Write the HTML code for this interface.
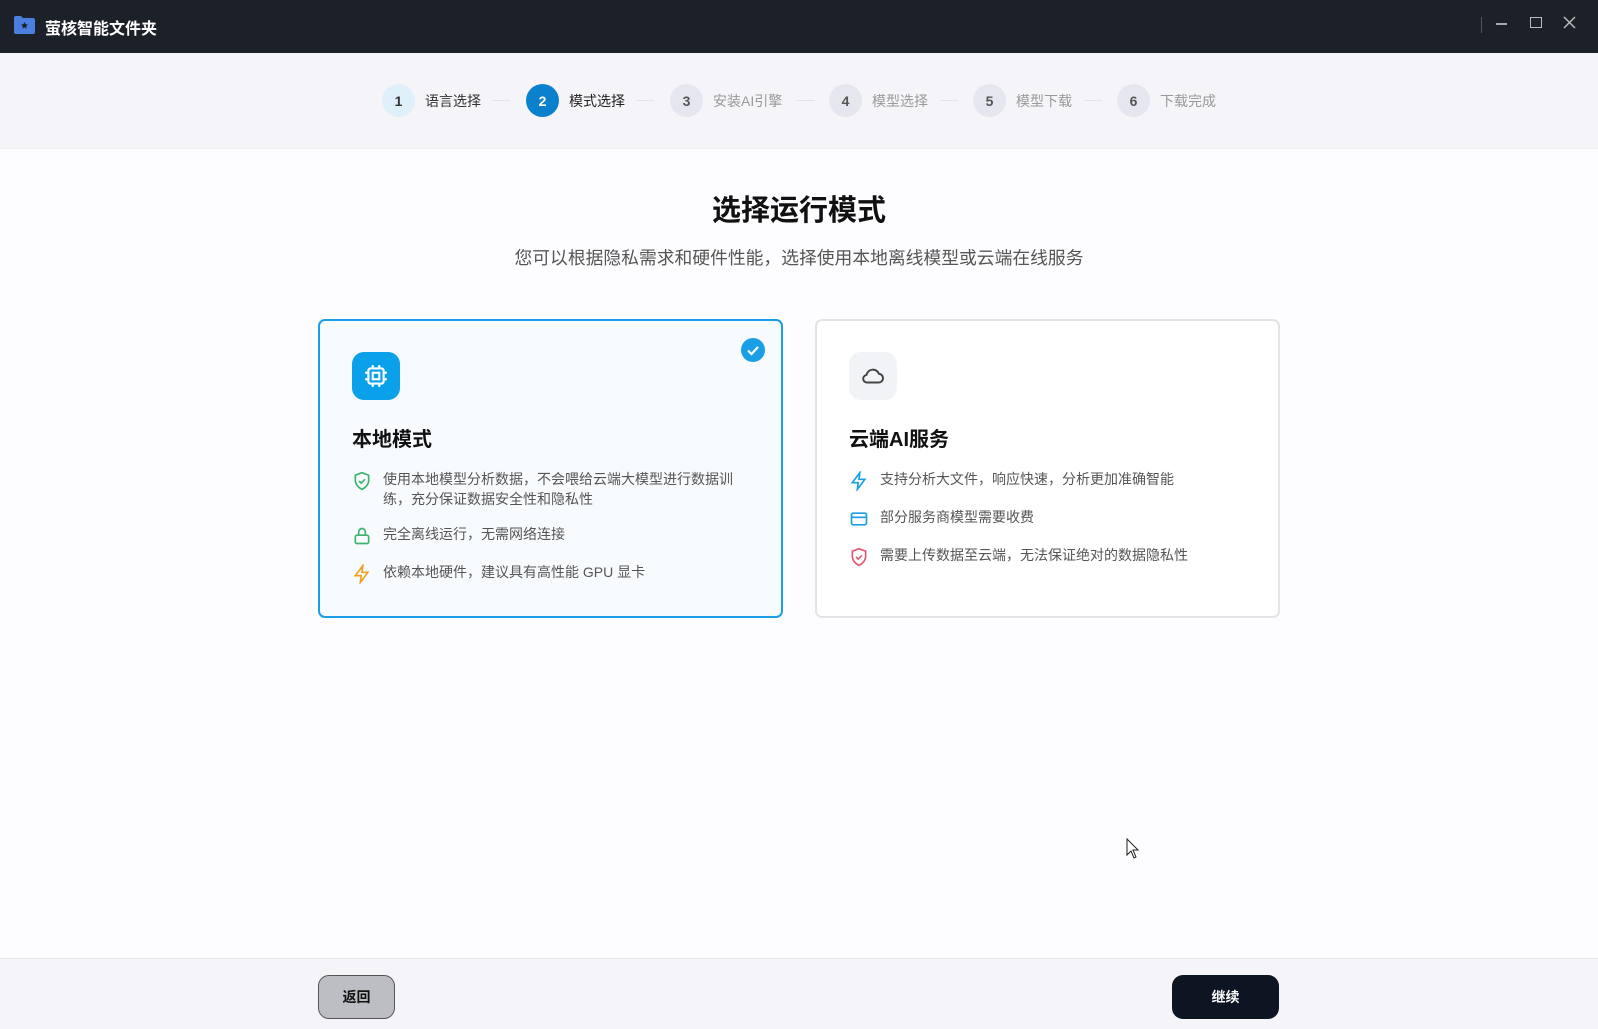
<!DOCTYPE html>
<html><head><meta charset="utf-8"><style>
*{margin:0;padding:0;box-sizing:border-box}
body{width:1598px;height:1029px;overflow:hidden;background:#fdfcfe;font-family:"Liberation Sans","Noto Sans CJK SC",sans-serif;position:relative;color:#222}
.tb{position:absolute;left:0;top:0;width:1598px;height:53px;background:#1c2129}
.tb .t{position:absolute;left:45px;top:15px;color:#fff;font-size:16px;font-weight:bold}
.steps{position:absolute;top:53px;left:0;width:1598px;height:96px;background:#f5f5f9}
.st{position:absolute;top:84px;height:33px;display:flex;align-items:center}
.c{width:33px;height:33px;border-radius:50%;background:#e6e7ee;color:#555;font-size:14px;display:flex;align-items:center;justify-content:center;font-weight:bold}
.st span{margin-left:10px;font-size:14px;color:#999}
.ln{position:absolute;top:100px;width:18px;height:1px;background:#e2e2e8}
h1{position:absolute;top:187px;left:0;width:1598px;text-align:center;font-size:29px;font-weight:bold;color:#111}
.sub{position:absolute;top:244px;width:1598px;text-align:center;font-size:17.8px;color:#555}
.card{position:absolute;top:319px;width:465px;height:299px;border-radius:7px;background:#fff;border:2px solid #e3e3e8}
.card.sel{border:2px solid #1a9ee6;background:#f8fbfe}
.ib{position:absolute;left:32px;top:31px;width:48px;height:48px;border-radius:12px;display:flex;align-items:center;justify-content:center}
.ct{position:absolute;left:32px;top:102px;font-size:20px;font-weight:bold;color:#111}
.it{position:absolute;left:63px;font-size:14px;color:#555;line-height:20px;width:370px}
.ic{position:absolute;left:32px}
.btn{position:absolute;top:975px;height:44px;border-radius:11px;display:flex;align-items:center;justify-content:center;font-size:14px;font-weight:bold}
</style></head><body>
<div class="tb">
<svg style="position:absolute;left:14px;top:16px" width="21" height="18" viewBox="0 0 21 18"><path d="M0 2a2 2 0 0 1 2-2h5l2 2h10a2 2 0 0 1 2 2v12a2 2 0 0 1-2 2H2a2 2 0 0 1-2-2z" fill="#4a7fe0"/><path d="M10.5 6l1.1 2.3 2.4.3-1.8 1.6.5 2.4-2.2-1.2-2.2 1.2.5-2.4-1.8-1.6 2.4-.3z" fill="#1c2129"/></svg>
<div class="t">萤核智能文件夹</div>
<div style="position:absolute;left:1481px;top:17px;width:1px;height:16px;background:#555"></div>
<div style="position:absolute;left:1496px;top:23px;width:11px;height:1.5px;background:#aaa"></div>
<div style="position:absolute;left:1530px;top:17px;width:12px;height:11px;border:1.5px solid #bbb"></div>
<svg style="position:absolute;left:1563px;top:16px" width="13" height="13"><path d="M1 1l11 11M12 1L1 12" stroke="#bbb" stroke-width="1.5"/></svg>
</div>
<div class="steps"></div>
<div style="position:absolute;top:148px;left:0;width:1598px;height:1px;background:#eee"></div>
<div class="st" style="left:382px"><div class="c" style="background:#dff0fb;color:#333">1</div><span style="color:#333">语言选择</span></div>
<div class="ln" style="left:492px"></div>
<div class="st" style="left:526px"><div class="c" style="background:#0b80cc;color:#fff">2</div><span style="color:#222">模式选择</span></div>
<div class="ln" style="left:636px"></div>
<div class="st" style="left:670px"><div class="c">3</div><span>安装AI引擎</span></div>
<div class="ln" style="left:797px"></div>
<div class="st" style="left:829px"><div class="c">4</div><span>模型选择</span></div>
<div class="ln" style="left:940px"></div>
<div class="st" style="left:973px"><div class="c">5</div><span>模型下载</span></div>
<div class="ln" style="left:1084px"></div>
<div class="st" style="left:1117px"><div class="c">6</div><span>下载完成</span></div>

<h1>选择运行模式</h1>
<div class="sub">您可以根据隐私需求和硬件性能，选择使用本地离线模型或云端在线服务</div>

<div class="card sel" style="left:318px">
<div class="ib" style="background:#0aa0ea"><svg width="26" height="26" viewBox="0 0 24 24" fill="none" stroke="#fff" stroke-width="2"><rect x="5" y="5" width="14" height="14" rx="2"/><rect x="9" y="9" width="6" height="6"/><path d="M9 2v3M15 2v3M9 19v3M15 19v3M2 9h3M2 15h3M19 9h3M19 15h3"/></svg></div>
<svg style="position:absolute;left:420px;top:16px" width="26" height="26"><circle cx="13" cy="13" r="12" fill="#1a9ee6"/><path d="M8 13.5l3.5 3.5 6.5-7" stroke="#fff" stroke-width="2.2" fill="none"/></svg>
<div class="ct">本地模式</div>
<svg class="ic" style="top:150px" width="20" height="20" viewBox="0 0 24 24" fill="none" stroke="#3cb46e" stroke-width="2"><path d="M12 2l8 3v6c0 5-3.5 9-8 11-4.5-2-8-6-8-11V5z"/><path d="M8.5 12l2.5 2.5 4.5-4.5"/></svg>
<div class="it" style="top:148px">使用本地模型分析数据，不会喂给云端大模型进行数据训练，充分保证数据安全性和隐私性</div>
<svg class="ic" style="top:205px" width="20" height="20" viewBox="0 0 24 24" fill="none" stroke="#3cb46e" stroke-width="2"><rect x="4" y="11" width="16" height="10" rx="2"/><path d="M8 11V7a4 4 0 0 1 8 0v4"/></svg>
<div class="it" style="top:203px">完全离线运行，无需网络连接</div>
<svg class="ic" style="top:243px" width="20" height="20" viewBox="0 0 24 24" fill="none" stroke="#f0a020" stroke-width="2"><path d="M13 2L4 14h7l-1 8 9-12h-7z"/></svg>
<div class="it" style="top:241px">依赖本地硬件，建议具有高性能 GPU 显卡</div>
</div>

<div class="card" style="left:815px">
<div class="ib" style="background:#f2f3f6"><svg width="26" height="26" viewBox="0 0 24 24" fill="none" stroke="#444" stroke-width="1.8"><path d="M7 18h10a4 4 0 0 0 .5-8 6 6 0 0 0-11.5 1A3.5 3.5 0 0 0 7 18z"/></svg></div>
<div class="ct">云端AI服务</div>
<svg class="ic" style="top:150px" width="20" height="20" viewBox="0 0 24 24" fill="none" stroke="#1a9ee6" stroke-width="2"><path d="M13 2L4 14h7l-1 8 9-12h-7z"/></svg>
<div class="it" style="top:148px">支持分析大文件，响应快速，分析更加准确智能</div>
<svg class="ic" style="top:188px" width="20" height="20" viewBox="0 0 24 24" fill="none" stroke="#1a9ee6" stroke-width="2"><rect x="3" y="5" width="18" height="14" rx="2"/><path d="M3 10h18"/></svg>
<div class="it" style="top:186px">部分服务商模型需要收费</div>
<svg class="ic" style="top:226px" width="20" height="20" viewBox="0 0 24 24" fill="none" stroke="#e05a70" stroke-width="2"><path d="M12 2l8 3v6c0 5-3.5 9-8 11-4.5-2-8-6-8-11V5z"/><path d="M8.5 12l2.5 2.5 4.5-4.5"/></svg>
<div class="it" style="top:224px">需要上传数据至云端，无法保证绝对的数据隐私性</div>
</div>

<div style="position:absolute;left:0;top:958px;width:1598px;height:71px;background:#f5f5f9;border-top:1px solid #e6e6ea"></div>
<div class="btn" style="left:318px;width:77px;background:#bcbec3;border:1px solid #555;color:#111">返回</div>
<div class="btn" style="left:1172px;width:107px;background:#0e1522;color:#fff">继续</div>
<svg style="position:absolute;left:1126px;top:838px" width="14" height="22"><path d="M1 1v16l4-4 3 7 2-1-3-7h5z" fill="#fff" stroke="#222" stroke-width="1"/></svg>
</body></html>
